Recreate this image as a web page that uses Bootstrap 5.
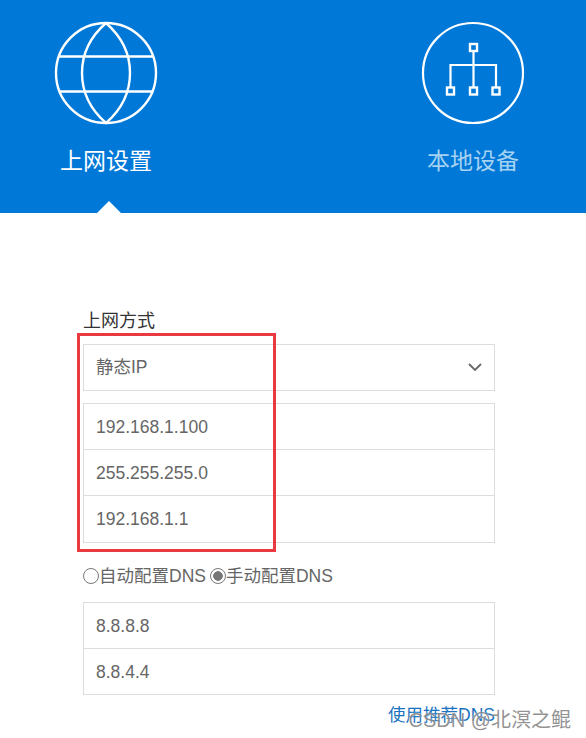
<!DOCTYPE html>
<html lang="zh-CN">
<head>
    <meta charset="UTF-8">
    <meta name="viewport" content="width=device-width, initial-scale=1">
    <title>上网设置</title>
    <link rel="stylesheet" href="https://cdn.jsdelivr.net/npm/bootstrap@5.3.0/dist/css/bootstrap.min.css">
    <style>
        body { font-family: "Liberation Sans", "Noto Sans CJK SC", sans-serif; color: #666; background: #fff; position: relative; height: 738px; overflow: hidden; }
        .top-bar { background: #0078d7; height: 213px; position: relative; }
        .tab-item { width: 104px; padding-top: 21px; color: #fff; font-size: 23px; line-height: 30px; white-space: nowrap; }
        .tab-item svg { display: block; margin-bottom: 21px; }
        .tab-first { margin-left: 54px; }
        .tab-second { margin-left: 263px; }
        .tab-off { color: #a6d2f2; }
        .tab-arrow { position: absolute; left: 97px; bottom: 0; width: 0; height: 0; border-left: 12px solid transparent; border-right: 12px solid transparent; border-bottom: 12px solid #fff; }
        .form-area { width: 412px; margin-left: 83px; padding-top: 96px; font-size: 17.5px; }
        .form-title { color: #333; font-size: 18px; line-height: 24px; margin-bottom: 11px; }
        .form-select.ip-select { height: 47px; padding: 0 12px; font-size: 17.5px; color: #666; border-color: #ddd; background-image: url("data:image/svg+xml,%3csvg xmlns='http://www.w3.org/2000/svg' viewBox='0 0 14 9'%3e%3cpath fill='none' stroke='%23666' stroke-width='1.8' d='M1 1l6 6 6-6'/%3e%3c/svg%3e"); background-position: right 12px center; background-size: 14px 9px; margin-bottom: 12px; }
        .list-group.ip-list { --bs-list-group-border-color: #ddd; --bs-list-group-color: #666; --bs-list-group-item-padding-x: 12px; --bs-list-group-item-padding-y: 0; }
        .ip-list .list-group-item { height: 46.5px; line-height: 46px; font-size: 17.5px; }
        .dns-row { height: 59.5px; color: #666; line-height: 24px; padding-top: 7px; }
        .dns-radio { appearance: none; flex: none; width: 16px; height: 16px; margin: 0; border: 1.5px solid #777; border-radius: 50%; background: #fff; }
        .dns-radio:checked { background: radial-gradient(circle, #777 0 4.5px, #fff 5px); }
        .dns-link { color: #1a73c0; text-decoration: none; line-height: 24px; margin-top: 8px; }
        .red-mark { position: absolute; left: 77px; top: 333px; width: 199px; height: 219px; border: 3px solid #e83a40; pointer-events: none; }
        .wm-text { position: absolute; right: 15px; top: 707px; font-size: 20px; line-height: 26px; color: rgba(110, 110, 110, .75); text-shadow: 0 0 2px #fff; white-space: nowrap; }
    </style>
</head>
<body>

    <div class="top-bar d-flex">
        <div class="tab-item text-center d-flex flex-column align-items-center tab-first">
            <svg width="104" height="104" viewBox="0 0 104 104" fill="none" stroke="#fff" stroke-width="2.4">
                <circle cx="52" cy="52" r="50"/>
                <path d="M52 2C20 30 20 74 52 102C84 74 84 30 52 2"/>
                <path d="M5 35.5H99M5 70.5H99"/>
            </svg>
            上网设置
        </div>
        <div class="tab-item text-center d-flex flex-column align-items-center tab-off tab-second">
            <svg width="104" height="104" viewBox="0 0 104 104" fill="none" stroke="#fff" stroke-width="2.2">
                <circle cx="52" cy="52" r="50"/>
                <rect x="49" y="23" width="7" height="7" stroke-width="2.4"/>
                <rect x="26" y="66.5" width="7" height="7" stroke-width="2.4"/>
                <rect x="49" y="66.5" width="7" height="7" stroke-width="2.4"/>
                <rect x="71.5" y="66.5" width="7" height="7" stroke-width="2.4"/>
                <path d="M52.5 30V66M29.5 66V44H75V66"/>
            </svg>
            本地设备
        </div>
        <span class="tab-arrow"></span>
    </div>

    <div class="form-area">
        <div class="form-title">上网方式</div>
        <select class="form-select ip-select rounded-0">
            <option>静态IP</option>
        </select>
        <div class="list-group ip-list rounded-0">
            <div class="list-group-item rounded-0">192.168.1.100</div>
            <div class="list-group-item rounded-0">255.255.255.0</div>
            <div class="list-group-item rounded-0">192.168.1.1</div>
        </div>
        <div class="dns-row d-flex align-items-center">
            <input class="dns-radio" type="radio" name="dns" id="dnsAuto">
            <label for="dnsAuto">自动配置DNS</label>
            <input class="dns-radio ms-1" type="radio" name="dns" id="dnsManual" checked>
            <label for="dnsManual">手动配置DNS</label>
        </div>
        <div class="list-group ip-list rounded-0">
            <div class="list-group-item rounded-0">8.8.8.8</div>
            <div class="list-group-item rounded-0">8.8.4.4</div>
        </div>
        <div class="text-end">
            <a class="dns-link d-inline-block" href="#">使用推荐DNS</a>
        </div>
    </div>

    <div class="red-mark"></div>
    <div class="wm-text">CSDN @北溟之鲲</div>

</body>
</html>
